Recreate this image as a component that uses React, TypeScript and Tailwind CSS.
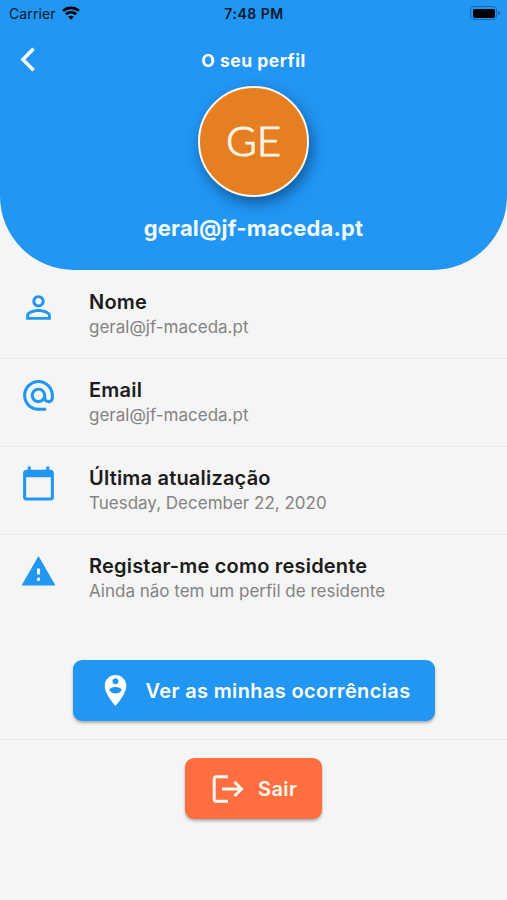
import type { ReactNode } from "react";

const PERSON =
  "M12 5.9c1.16 0 2.1.94 2.1 2.1s-.94 2.1-2.1 2.1S9.9 9.16 9.9 8s.94-2.1 2.1-2.1m0 9c2.97 0 6.1 1.46 6.1 2.1v1.1H5.9V17c0-.64 3.13-2.1 6.1-2.1M12 4C9.79 4 8 5.79 8 8s1.79 4 4 4 4-1.79 4-4-1.79-4-4-4zm0 9c-2.67 0-8 1.34-8 4v3h16v-3c0-2.66-5.33-4-8-4z";
const AT =
  "M12 1.95c-5.52 0-10 4.48-10 10s4.48 10 10 10h5v-2h-5c-4.34 0-8-3.66-8-8s3.66-8 8-8 8 3.66 8 8v1.43c0 .79-.71 1.57-1.5 1.57s-1.5-.78-1.5-1.57v-1.43c0-2.76-2.24-5-5-5s-5 2.24-5 5 2.24 5 5 5c1.38 0 2.64-.56 3.54-1.47.65.89 1.77 1.47 2.96 1.47 1.97 0 3.5-1.6 3.5-3.57v-1.43c0-5.52-4.48-10-10-10zm0 13c-1.66 0-3-1.34-3-3s1.34-3 3-3 3 1.34 3 3-1.34 3-3 3z";
const CALENDAR =
  "M20 3h-1V1h-2v2H7V1H5v2H4c-1.1 0-2 .9-2 2v16c0 1.1.9 2 2 2h16c1.1 0 2-.9 2-2V5c0-1.1-.9-2-2-2zm0 18H4V8h16v13z";
const WARNING = "M1 21h22L12 2 1 21zm12-3h-2v-2h2v2zm0-4h-2v-4h2v4z";
const PIN =
  "M12 2C8.14 2 5 5.14 5 9c0 5.25 7 13 7 13s7-7.75 7-13c0-3.86-3.14-7-7-7zm0 2c1.1 0 2 .9 2 2 0 1.11-.9 2-2 2s-2-.89-2-2c0-1.1.9-2 2-2zm0 10c-1.67 0-3.14-.85-4-2.15.02-1.32 2.67-2.05 4-2.05s3.98.73 4 2.05c-.86 1.3-2.33 2.15-4 2.15z";

function Icon({ d }: { d: string }) {
  return (
    <svg viewBox="0 0 24 24" className="size-[37px] shrink-0" fill="currentColor">
      <path d={d} />
    </svg>
  );
}

function StatusBar() {
  return (
    <div className="grid h-7 grid-cols-3 items-center pl-[8px] pr-[7px] text-[#06182b]">
      <div className="flex items-center gap-[6px] pl-px">
        <span className="text-[14px] leading-7 tracking-[0.1px]">Carrier</span>
        <svg viewBox="0 0 18 14" className="mb-[2px] h-[14px] w-[18px]" fill="none" stroke="#000" strokeWidth="2.6">
          <path d="M1 4.9C5.5.8 12.5.8 17 4.9" />
          <path d="M3.8 8.2c3-2.7 7.4-2.7 10.4 0" />
          <path d="M6.2 10.7 9 13.7l2.8-3c-1.6-1.4-4-1.4-5.6 0z" fill="#000" stroke="none" />
        </svg>
      </div>
      <div className="text-center text-[14px] font-semibold leading-7 tracking-[0.5px]">7:48 PM</div>
      <div className="flex items-center justify-end pb-[2px]">
        <div className="h-[14px] w-[27px] rounded-[4px] border border-[#1766ad] p-[1.5px]">
          <div className="h-full rounded-[2px] bg-black" />
        </div>
        <div className="ml-px h-1 w-[2px] rounded-r-full bg-[#1766ad]" />
      </div>
    </div>
  );
}

function Row({ icon, title, sub, last }: { icon: string; title: ReactNode; sub: ReactNode; last?: boolean }) {
  return (
    <div className={`flex h-[88px] pl-[20px] pt-[18px] ${last ? "" : "border-b border-[#e9e9e9]"}`}>
      <div className="text-[#2196f3]">
        <Icon d={icon} />
      </div>
      <div className="ml-[32px]">
        <div className="text-[20px] font-semibold leading-[27px] tracking-[0.2px] text-[#1c1c1c]">{title}</div>
        <div className="text-[17px] leading-[22px] text-[#838383]">{sub}</div>
      </div>
    </div>
  );
}

export default function App() {
  return (
    <div className="flex h-[900px] w-[507px] flex-col overflow-hidden bg-[#f5f5f5] font-['Inter',sans-serif]">
      <header className="h-[269.5px] shrink-0 rounded-b-[74px] bg-[#2196f3]">
        <StatusBar />
        <div className="grid h-[58px] grid-cols-[60px_1fr_60px] items-center">
          <svg viewBox="0 0 16 26" className="mb-[-5px] ml-5 h-[25px] w-[15.5px]" fill="none" stroke="white" strokeWidth="3.6">
            <path d="M14 1.8 3 13l11 11.2" />
          </svg>
          <h1 className="mt-[8px] text-center text-[17.5px] font-bold leading-6 tracking-[0.5px] text-white">O seu perfil</h1>
        </div>
        <div className="mx-auto flex size-[111px] items-center justify-center rounded-full border-2 border-[#fff7ec] bg-[#e67e22] pb-1 font-['Lato',sans-serif] text-[42px] font-light leading-none text-[#fff5e5] shadow-[3px_6px_14px_rgba(0,30,70,0.5)] [-webkit-text-stroke:1.1px_#fff5e5]">
          GE
        </div>
        <div className="mt-[15px] text-center text-[22px] font-bold leading-8 tracking-[0.2px] text-[#f0faff]">geral@jf-maceda.pt</div>
      </header>

      <main className="flex flex-col">
        <div className="mt-[1.5px]">
          <Row icon={PERSON} title="Nome" sub="geral@jf-maceda.pt" />
          <Row icon={AT} title="Email" sub="geral@jf-maceda.pt" />
          <Row icon={CALENDAR} title="Última atualização" sub="Tuesday, December 22, 2020" />
          <Row icon={WARNING} title="Registar-me como residente" sub="Ainda não tem um perfil de residente" last />
        </div>
        <div className="flex h-[117px] justify-center border-b border-[#e6e6e6] pt-[37px]">
          <button className="flex h-[61px] w-[362px] items-center rounded-[9px] bg-[#2196f3] pl-[24px] text-white shadow-[0_2px_3px_rgba(0,0,0,0.3)]">
            <Icon d={PIN} />
            <span className="ml-[12px] whitespace-nowrap text-[20px] font-semibold tracking-[0.36px]">Ver as minhas ocorrências</span>
          </button>
        </div>
        <div className="flex justify-center pt-[18px]">
          <button className="flex h-[61px] w-[137px] items-center rounded-[9px] bg-[#ff6e40] pl-[27px] text-[#fff8ee] shadow-[0_2px_3px_rgba(0,0,0,0.3)]">
            <svg viewBox="0 0 32 28" className="h-7 w-8 shrink-0" fill="none" stroke="currentColor" strokeWidth="3">
              <path d="M16 1.8H4.5Q2.2 1.8 2.2 4.1v19.8q0 2.3 2.3 2.3H16" />
              <path d="M10 14h19M22.5 7l7 7-7 7" />
            </svg>
            <span className="ml-[14px] text-[20px] font-semibold tracking-[0.4px]">Sair</span>
          </button>
        </div>
      </main>
    </div>
  );
}
